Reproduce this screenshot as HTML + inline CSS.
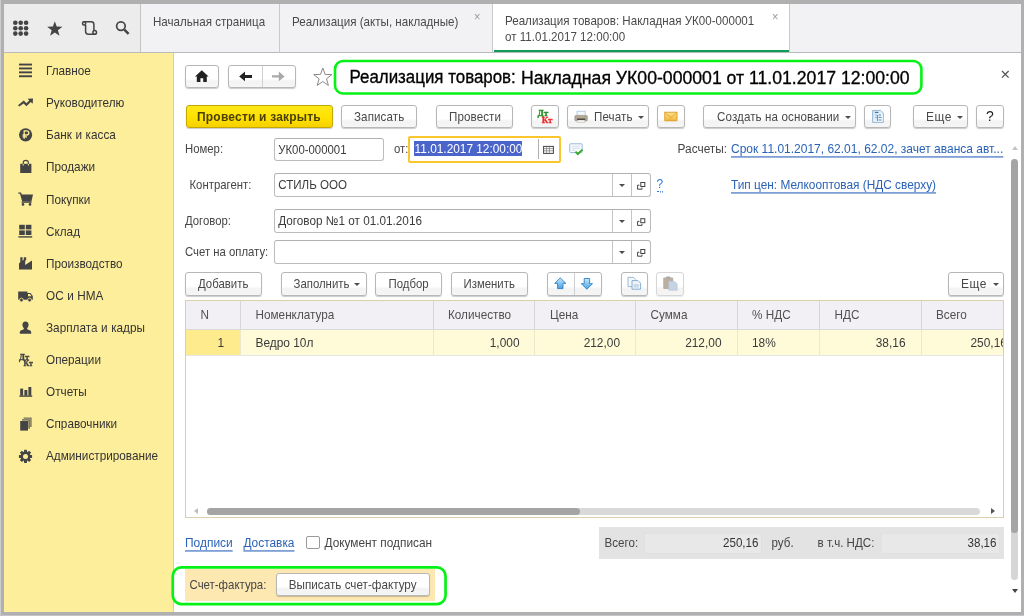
<!DOCTYPE html>
<html><head><meta charset="utf-8">
<style>
*{box-sizing:border-box;margin:0;padding:0}
html,body{width:1024px;height:616px;overflow:hidden;background:#b3b3b3}
body{font-family:"Liberation Sans",sans-serif;font-size:11.6px;color:#3c3c3c;position:relative}
.abs,.abs *{position:absolute}
.t{white-space:nowrap;line-height:14px;transform:scaleY(1.08);transform-origin:0 64%}
#frame{left:0;top:0;width:1024px;height:616px;background:#b0b0b0;will-change:transform}
#topbar{left:4px;top:4px;width:1017px;height:49px;background:#ececec}
#tabs{left:140px;top:4px;width:881px;height:49px;background:#f2f1f4;border-left:1px solid #c4c4c4}
#barline{left:4px;top:52px;width:1017px;height:1px;background:#b9b9b9}
#side{left:4px;top:53px;width:170px;height:559px;background:#fdee9c;border-right:1px solid #e3d274}
#main{left:174px;top:53px;width:847px;height:559px;background:#fff}
.btn{border:1px solid #b7b7b7;border-radius:3px;background:linear-gradient(#ffffff 0%,#ffffff 60%,#f3f3f3 72%,#f6f6f6 100%);box-shadow:0 1px 1px rgba(0,0,0,.2);height:23.5px}
.btn .t{top:4.2px;color:#484848;letter-spacing:.1px}
.inp{border:1px solid #bcbcbc;border-top-color:#b0b0b0;border-radius:3px;background:#fff}
.inp .t{color:#3c3c3c}
a,.lnk{color:#2a62b8;text-decoration:underline;text-underline-offset:2.6px;text-decoration-thickness:1px}
.ybtn{background:linear-gradient(#ffe81a 0%,#ffe200 55%,#f6d000 100%);border-color:#c4a800}
.dd{width:0;height:0;border-left:3px solid transparent;border-right:3px solid transparent;border-top:3.3px solid #4c4c4c}
.vl{top:0;width:1px;height:100%;background:#c4c4c4}
.lab{font-size:11.35px;color:#454545}
.cl{top:301px;width:1px;height:54px;background:linear-gradient(#d6d6d6 0,#d6d6d6 28px,#ece8cc 29px,#ece8cc 54px)}
.th{top:307.5px;color:#505050;font-size:11.75px}
.td{top:336px;color:#3a3a3a;font-size:11.9px}
.ttl{top:67.3px;line-height:22px;color:#000;-webkit-text-stroke:.3px #000;transform:scaleY(1.07);transform-origin:0 80%}
#edgeL{left:0;top:0;width:1px;height:616px;background:#cdcdcd}
#edgeB{left:0;top:615px;width:1024px;height:1px;background:#c4c4ca}
.sb{font-size:11.75px;word-spacing:.3px;transform:scaleY(1.09);transform-origin:0 30%}
</style></head><body>
<div id="frame" class="abs">
<div id="edgeL"></div><div id="edgeB"></div>
<div id="topbar"></div>
<div id="tabs"></div>
<div id="barline"></div>
<div id="side"></div>
<div id="main"></div>
<!--top-->
<svg style="left:0;top:0" width="140" height="54" viewBox="0 0 140 54">
 <g fill="#444">
  <circle cx="15.3" cy="22.8" r="2.3"/><circle cx="20.7" cy="22.8" r="2.3"/><circle cx="26.1" cy="22.8" r="2.3"/>
  <circle cx="15.3" cy="28.2" r="2.3"/><circle cx="20.7" cy="28.2" r="2.3"/><circle cx="26.1" cy="28.2" r="2.3"/>
  <circle cx="15.3" cy="33.6" r="2.3"/><circle cx="20.7" cy="33.6" r="2.3"/><circle cx="26.1" cy="33.6" r="2.3"/>
  <path d="M54.8 21.2 L56.7 26.6 L62.4 26.7 L57.9 30.2 L59.5 35.7 L54.8 32.4 L50.1 35.7 L51.7 30.2 L47.2 26.7 L52.9 26.6 Z"/>
 </g>
 <g fill="none" stroke="#444" stroke-width="1.5">
  <path d="M85.6 25 L85.6 31.5 Q85.6 34.2 88.3 34.2 L94.6 34.2 M83.6 21.8 L91.2 21.8 Q93.9 21.8 93.9 24.5 L93.9 31"/>
  <rect x="82.6" y="21.8" width="3" height="3.2" rx="1.2"/>
  <circle cx="94.7" cy="32.4" r="1.8"/>
  <circle cx="120.9" cy="26.1" r="4.3" stroke-width="1.7"/>
  <path d="M124.3 29.6 L128.6 33.8" stroke-width="2.5" stroke-linecap="butt"/>
 </g>
</svg>
<div class="t" style="left:153px;top:15px;color:#4a4a4a">Начальная страница</div>
<div style="left:279px;top:4px;width:1px;height:49px;background:#c9c9c9"></div>
<div class="t" style="left:292px;top:15px;color:#4a4a4a">Реализация (акты, накладные)</div>
<div class="t" style="left:474px;top:10px;color:#999;font-size:11px">×</div>
<div style="left:492px;top:4px;width:1px;height:49px;background:#c9c9c9"></div>
<div style="left:493px;top:4px;width:296px;height:48px;background:#fff"></div>
<div style="left:494px;top:50px;width:295px;height:2px;background:#0f9d58"></div>
<div style="left:789px;top:4px;width:1px;height:49px;background:#c9c9c9"></div>
<div class="t" style="left:505px;top:14.3px;color:#4a4a4a">Реализация товаров: Накладная УК00-000001</div>
<div class="t" style="left:505px;top:30.3px;color:#4a4a4a">от 11.01.2017 12:00:00</div>
<div class="t" style="left:772px;top:10px;color:#999;font-size:11px">×</div>
<!--side-->
<svg style="left:0;top:54px" width="60" height="440" viewBox="0 54 60 440">
<g fill="#444" stroke="none">
 <!-- hamburger -->
 <rect x="19" y="63.6" width="13" height="1.9"/><rect x="19" y="67.5" width="13" height="1.9"/><rect x="19" y="71.4" width="13" height="1.9"/><rect x="19" y="75.3" width="13" height="1.9"/>
 <!-- trend -->
 <path d="M19.2 106.6 L18 105.2 L23.8 100.6 L26.4 103.2 L29.3 100.4 L27.6 98.7 L33 98.4 L32.7 103.8 L30.8 101.9 L26.4 106.2 L23.6 103.4 Z"/>
 <!-- ruble -->
 <circle cx="25.6" cy="134.8" r="6.6"/>
 <!-- bag -->
 <path d="M20.2 163.8 L31.4 163.8 L31.4 173 L20.2 173 Z"/>
 <!-- cart -->
 <path d="M18.3 192.4 L21 192.4 L21.9 194.6 L33 194.6 L31.4 201.6 L22.2 201.6 L20 193.8 L18.3 193.8 Z"/><rect x="21.6" y="201.4" width="10" height="1.4"/>
 <circle cx="23" cy="204.4" r="1.3"/><circle cx="30" cy="204.4" r="1.3"/>
 <!-- warehouse -->
 <rect x="19.2" y="224.8" width="5.6" height="4.6"/><rect x="25.8" y="224.8" width="5.6" height="4.6"/>
 <rect x="19.2" y="230.4" width="5.6" height="4.6"/><rect x="25.8" y="230.4" width="5.6" height="4.6"/>
 <rect x="18.4" y="236.2" width="13.8" height="1.4"/>
 <!-- factory -->
 <path d="M19 269.6 L19 263.5 L20.3 262 L20.3 257.2 L22.6 257.2 L22.6 261 L23.8 259.6 L23.8 257.2 L26.2 257.2 L26.2 259.8 L25.2 261 L25.2 265 L32 260.5 L32 269.6 Z"/>
 <!-- truck -->
 <path d="M18.2 291.4 L27.4 291.4 L27.4 293 L30.4 293 L32.8 296 L32.8 299.8 L18.2 299.8 Z"/>
 <circle cx="21.4" cy="300" r="1.9" stroke="#fdee9c" stroke-width="0.8"/><circle cx="29.6" cy="300" r="1.9" stroke="#fdee9c" stroke-width="0.8"/>
 <!-- person -->
 <path d="M25.5 321.4 C27.6 321.4 28.6 323 28.6 324.8 C28.6 326.4 27.8 327.6 27.2 328.2 L27.2 329.2 L30.2 330.4 Q31.2 331 31.2 332.2 L31.2 333.8 L19.8 333.8 L19.8 332.2 Q19.8 331 20.8 330.4 L23.8 329.2 L23.8 328.2 C23.2 327.6 22.4 326.4 22.4 324.8 C22.4 323 23.4 321.4 25.5 321.4 Z"/>
 <!-- bars -->
 <rect x="20.2" y="388.6" width="2.9" height="7"/><rect x="24.4" y="390" width="2.9" height="5.6"/><rect x="28.4" y="387" width="2.9" height="8.6"/>
 <rect x="19.4" y="395.4" width="12.8" height="1.4"/>
 <!-- docs -->
 <path d="M23.6 417.4 L31.6 417.4 L31.6 427 L30.2 427 L30.2 418.8 L23.6 418.8 Z" opacity=".75"/>
 <path d="M22 419.2 L29.8 419.2 L29.8 428.8 L28.4 428.8 L28.4 420.6 L22 420.6 Z" opacity=".85"/>
 <rect x="20.2" y="421" width="7.8" height="9.6"/>
 <!-- gear -->
 <g transform="translate(25.5 456.4)">
  <g id="teeth"><rect x="-1.5" y="-6.6" width="3" height="13.2" rx=".4"/><rect x="-1.5" y="-6.6" width="3" height="13.2" rx=".4" transform="rotate(45)"/><rect x="-1.5" y="-6.6" width="3" height="13.2" rx=".4" transform="rotate(90)"/><rect x="-1.5" y="-6.6" width="3" height="13.2" rx=".4" transform="rotate(135)"/></g>
  <circle r="4.9"/><circle r="2.5" fill="#fdee9c"/>
 </g>
</g>
<!-- bag handle -->
<path d="M23.2 165.5 L23.2 162.8 Q23.2 160.4 25.8 160.4 Q28.4 160.4 28.4 162.8 L28.4 165.5" fill="none" stroke="#444" stroke-width="1.1"/>
<path d="M23.2 164 L23.2 165.6 M28.4 164 L28.4 165.6" stroke="#fdee9c" stroke-width="1" fill="none"/>
<!-- ruble glyph -->
<path d="M24.2 138.8 L24.2 130.8 L26.6 130.8 Q28.8 130.8 28.8 132.9 Q28.8 135 26.6 135 L22.6 135 M22.6 136.9 L27 136.9" fill="none" stroke="#fdee9c" stroke-width="1.3"/>
<!-- truck window -->
<path d="M28 294 L29.9 294 L31.6 296.3 L28 296.3 Z" fill="#fdee9c"/>
<!-- dtkt -->
<text x="19" y="360" font-family="Liberation Serif" font-weight="bold" font-size="8.7" fill="#444" stroke="#444" stroke-width=".35">Дт</text>
<text x="23.5" y="366.4" font-family="Liberation Serif" font-weight="bold" font-size="7.8" fill="#444" stroke="#444" stroke-width=".35">Кт</text>
</svg>
<div class="t sb" style="left:46px;top:63.1px;color:#333">Главное</div>
<div class="t sb" style="left:46px;top:95.2px;color:#333">Руководителю</div>
<div class="t sb" style="left:46px;top:127.3px;color:#333">Банк и касса</div>
<div class="t sb" style="left:46px;top:159.4px;color:#333">Продажи</div>
<div class="t sb" style="left:46px;top:191.5px;color:#333">Покупки</div>
<div class="t sb" style="left:46px;top:223.6px;color:#333">Склад</div>
<div class="t sb" style="left:46px;top:255.7px;color:#333">Производство</div>
<div class="t sb" style="left:46px;top:287.8px;color:#333">ОС и НМА</div>
<div class="t sb" style="left:46px;top:319.9px;color:#333">Зарплата и кадры</div>
<div class="t sb" style="left:46px;top:352.0px;color:#333">Операции</div>
<div class="t sb" style="left:46px;top:384.1px;color:#333">Отчеты</div>
<div class="t sb" style="left:46px;top:416.2px;color:#333">Справочники</div>
<div class="t sb" style="left:46px;top:448.3px;color:#333">Администрирование</div>
<!--head-->
<div class="btn" style="left:185px;top:65px;width:34px;height:23px"></div>
<div class="btn" style="left:228px;top:65px;width:68px;height:23px"></div>
<div style="left:262px;top:66px;width:1px;height:21px;background:#d0d0d0"></div>
<svg style="left:180px;top:60px" width="160" height="36" viewBox="180 60 160 36">
 <path d="M201.8 70.2 L208.6 76.6 L206.8 76.6 L206.8 82 L203.2 82 L203.2 78.2 L200.4 78.2 L200.4 82 L196.8 82 L196.8 76.6 L195 76.6 Z" fill="#222"/>
 <path d="M239.2 76.4 L245 71.6 L245 74.9 L252 74.9 L252 77.9 L245 77.9 L245 81.2 Z" fill="#222"/>
 <path d="M284.6 76.4 L278.8 71.6 L278.8 75.2 L272 75.2 L272 77.6 L278.8 77.6 L278.8 81.2 Z" fill="#a9a9a9"/>
 <path d="M322.8 68.0 L325.1 74.4 L331.9 74.6 L326.5 78.8 L328.4 85.4 L322.8 81.5 L317.2 85.4 L319.1 78.8 L313.7 74.6 L320.5 74.4 Z" fill="#fff" stroke="#8a8a8a" stroke-width="1"/>
</svg>
<svg style="left:330px;top:56px" width="600" height="44" viewBox="330 56 600 44"><rect x="335" y="61" width="586.4" height="32.5" rx="8" fill="none" stroke="#06f216" stroke-width="2.6"/></svg>
<div class="t ttl" style="left:349.5px;font-size:16.9px">Реализация товаров:</div>
<div class="t ttl" style="left:521px;font-size:17.65px">Накладная УК00-000001 от 11.01.2017 12:00:00</div>
<svg style="left:1000px;top:69px" width="12" height="12" viewBox="0 0 12 12"><path d="M2 2 L8.6 8.6 M8.6 2 L2 8.6" stroke="#555" stroke-width="1.3" fill="none"/></svg>
<!--form-->
<!-- toolbar -->
<div class="btn ybtn" style="left:186px;top:104.7px;width:146.5px"><div class="t" style="left:10px;font-weight:bold;font-size:12px;color:#4a4000;letter-spacing:.2px">Провести и закрыть</div></div>
<div class="btn" style="left:341px;top:104.7px;width:76px"><div class="t" style="left:12px">Записать</div></div>
<div class="btn" style="left:436px;top:104.7px;width:77px"><div class="t" style="left:12px">Провести</div></div>
<div class="btn" style="left:531px;top:104.7px;width:27.6px"></div>
<div class="btn" style="left:567px;top:104.7px;width:82px"><div class="t" style="left:26px">Печать</div><div class="dd" style="left:70px;top:10px"></div></div>
<div class="btn" style="left:657px;top:104.7px;width:28px"></div>
<div class="btn" style="left:703px;top:104.7px;width:153px"><div class="t" style="left:13px">Создать на основании</div><div class="dd" style="left:141px;top:10px"></div></div>
<div class="btn" style="left:864px;top:104.7px;width:27px"></div>
<div class="btn" style="left:913px;top:104.7px;width:55px"><div class="t" style="left:12px;font-size:12px;letter-spacing:.5px">Еще</div><div class="dd" style="left:43px;top:10px"></div></div>
<div class="btn" style="left:976px;top:104.7px;width:28px"><div class="t" style="left:9px;top:2px;font-size:14px;color:#222;line-height:17px">?</div></div>
<!-- row 1 -->
<div class="t lab" style="left:185px;top:142px">Номер:</div>
<div class="inp" style="left:274px;top:138px;width:110px;height:22.5px"><div class="t" style="left:3.2px;top:3.5px;font-size:11.4px">УК00-000001</div></div>
<div class="t lab" style="left:394px;top:142px">от:</div>
<div style="left:408px;top:135.5px;width:153px;height:27px;border:2px solid #fbc62b;border-radius:2px;background:#fff"></div>
<div style="left:414.4px;top:141.3px;width:108px;height:14.6px;background:#4b64c9"></div>
<div class="t" style="left:414.6px;top:141.6px;font-size:11.85px;color:#fff">11.01.2017 12:00:00</div>
<div style="left:538px;top:139px;width:1px;height:20px;background:#b0b0b0"></div>
<div class="t lab" style="left:677.5px;top:142px;font-size:11.9px">Расчеты:</div>
<div class="t lnk" style="left:731px;top:142px;font-size:12px">Срок 11.01.2017, 62.01, 62.02, зачет аванса авт...</div>
<!-- row 2 -->
<div class="t lab" style="left:189.5px;top:178px">Контрагент:</div>
<div class="inp" style="left:274px;top:173px;width:377px;height:23.5px"><div class="t" style="left:3.2px;top:3.5px">СТИЛЬ ООО</div><div class="vl" style="left:337px"></div><div class="vl" style="left:356px"></div><div class="dd" style="left:344px;top:10px"></div></div>
<div class="t" style="left:656.5px;top:178px;color:#2a7ad0;border-bottom:1px dotted #2a7ad0;line-height:13px;font-size:12px">?</div>
<div class="t lnk" style="left:731px;top:178px;font-size:11.85px">Тип цен: Мелкооптовая (НДС сверху)</div>
<!-- row 3 -->
<div class="t lab" style="left:185px;top:213.9px">Договор:</div>
<div class="inp" style="left:274px;top:209.1px;width:377px;height:23.5px"><div class="t" style="left:3.2px;top:3.5px;font-size:11.75px">Договор №1 от 01.01.2016</div><div class="vl" style="left:337px"></div><div class="vl" style="left:356px"></div><div class="dd" style="left:344px;top:10px"></div></div>
<!-- row 4 -->
<div class="t lab" style="left:185px;top:244.9px">Счет на оплату:</div>
<div class="inp" style="left:274px;top:240.2px;width:377px;height:23.5px"><div class="vl" style="left:337px"></div><div class="vl" style="left:356px"></div><div class="dd" style="left:344px;top:10px"></div></div>
<!--table-->
<!-- table toolbar -->
<div class="btn" style="left:185px;top:272.2px;width:77px"><div class="t" style="left:12px;font-size:11.4px;letter-spacing:0">Добавить</div></div>
<div class="btn" style="left:280.5px;top:272.2px;width:86px"><div class="t" style="left:12px;font-size:11.4px;letter-spacing:0">Заполнить</div><div class="dd" style="left:72.5px;top:10px"></div></div>
<div class="btn" style="left:375px;top:272.2px;width:67px"><div class="t" style="left:12.5px;font-size:11.4px;letter-spacing:0">Подбор</div></div>
<div class="btn" style="left:450.5px;top:272.2px;width:77px"><div class="t" style="left:12px;font-size:11.4px;letter-spacing:0">Изменить</div></div>
<div class="btn" style="left:547px;top:272.2px;width:55px"></div>
<div style="left:574px;top:273.2px;width:1px;height:21.5px;background:#cfcfcf"></div>
<div class="btn" style="left:621px;top:272.2px;width:27px"></div>
<div class="btn" style="left:656px;top:272.2px;width:28px;border-color:#d6d6d6;box-shadow:0 1px 1px rgba(0,0,0,.08)"></div>
<div class="btn" style="left:948px;top:272.2px;width:56px"><div class="t" style="left:12px;font-size:12px;letter-spacing:.5px">Еще</div><div class="dd" style="left:44px;top:10px"></div></div>
<!-- table -->
<div style="left:185px;top:300px;width:819px;height:218px;border:1px solid #d9d0b0;background:#fff"></div>
<div style="left:186px;top:301px;width:817px;height:28px;background:#f2f0f4"></div>
<div style="left:186px;top:329px;width:817px;height:1px;background:#d9d9d9"></div>
<div style="left:186px;top:330px;width:817px;height:25px;background:#fffbd9"></div>
<div style="left:186px;top:330px;width:54px;height:25px;background:#fdeb8e"></div>
<div style="left:186px;top:355px;width:817px;height:1px;background:#e6e6e6"></div>
<div class="cl" style="left:240px"></div><div class="cl" style="left:433px"></div><div class="cl" style="left:534px"></div><div class="cl" style="left:635px"></div><div class="cl" style="left:736.5px"></div><div class="cl" style="left:819px"></div><div class="cl" style="left:920.5px"></div>
<div class="t th" style="left:200.5px">N</div>
<div class="t th" style="left:255.5px">Номенклатура</div>
<div class="t th" style="left:448px">Количество</div>
<div class="t th" style="left:550px">Цена</div>
<div class="t th" style="left:650.5px">Сумма</div>
<div class="t th" style="left:752px">% НДС</div>
<div class="t th" style="left:834.5px">НДС</div>
<div class="t th" style="left:936px">Всего</div>
<div class="t td" style="right:800px">1</div>
<div class="t td" style="left:255.5px">Ведро 10л</div>
<div class="t td" style="right:504.5px">1,000</div>
<div class="t td" style="right:404px">212,00</div>
<div class="t td" style="right:302.5px">212,00</div>
<div class="t td" style="left:752px">18%</div>
<div class="t td" style="right:118.5px">38,16</div>
<div style="left:960px;top:330px;width:43px;height:25px;overflow:hidden"><div class="t td" style="left:10.5px;top:6px">250,16</div></div>
<!-- h scroll -->
<div style="left:207px;top:508px;width:773px;height:7px;border-radius:4px;background:#d9d9d9"></div>
<div style="left:207px;top:508px;width:373px;height:7px;border-radius:4px;background:#a4a4a4"></div>
<div style="left:194px;top:508px;width:0;height:0;border-top:3.5px solid transparent;border-bottom:3.5px solid transparent;border-right:4px solid #bdbdbd"></div>
<div style="left:991px;top:508px;width:0;height:0;border-top:3.5px solid transparent;border-bottom:3.5px solid transparent;border-left:4px solid #555"></div>
<!-- v scroll -->
<div style="left:1011.2px;top:159px;width:7px;height:421px;border-radius:4px;background:#d6d6d6"></div>
<div style="left:1011.2px;top:159px;width:7px;height:374px;border-radius:4px;background:#a4a4a4"></div>
<div style="left:1011.5px;top:145.5px;width:0;height:0;border-left:3.5px solid transparent;border-right:3.5px solid transparent;border-bottom:4px solid #c4c4c4"></div>
<div style="left:1011.5px;top:589px;width:0;height:0;border-left:3.5px solid transparent;border-right:3.5px solid transparent;border-top:4px solid #444"></div>
<!--icons-->
<svg style="left:174px;top:100px" width="850" height="200" viewBox="174 100 850 200">
<defs>
 <linearGradient id="gEnv" x1="0" y1="0" x2="0" y2="1"><stop offset="0" stop-color="#fde596"/><stop offset="1" stop-color="#f0b234"/></linearGradient>
 <linearGradient id="gArr" x1="0" y1="0" x2="0" y2="1"><stop offset="0" stop-color="#c8e8fc"/><stop offset="1" stop-color="#4aa2e4"/></linearGradient>
 <linearGradient id="gDoc" x1="0" y1="0" x2="1" y2="1"><stop offset="0" stop-color="#cfe2f1"/><stop offset="1" stop-color="#ffffff"/></linearGradient>
</defs>
<!-- DtKt -->
<text x="537.4" y="116.2" font-family="Liberation Serif" font-weight="bold" font-size="9.2" fill="#1e8a1e" stroke="#1e8a1e" stroke-width=".3">Дт</text>
<text x="541.8" y="123" font-family="Liberation Serif" font-weight="bold" font-size="9" fill="#ee2a2a" stroke="#ee2a2a" stroke-width=".3">Кт</text>
<!-- printer -->
<rect x="577" y="111.2" width="8.2" height="5" fill="#f4f8fc" stroke="#a9c3dc" stroke-width=".8"/>
<rect x="574.8" y="115.4" width="12.6" height="5.6" rx="1.2" fill="#b9a898" stroke="#9c8b7c" stroke-width=".6"/>
<rect x="577" y="118.6" width="8.2" height="1.6" fill="#2e2a28"/>
<rect x="577.4" y="120" width="7.4" height="2.6" fill="#f2f2f2" stroke="#b5b5b5" stroke-width=".5"/>
<rect x="584.2" y="116.6" width="1.4" height="1" fill="#5ad05a"/>
<!-- envelope -->
<rect x="664.8" y="112.2" width="12.2" height="8.6" fill="url(#gEnv)" stroke="#d9991c" stroke-width=".9"/>
<path d="M665 112.6 L670.9 117.6 L676.8 112.6" fill="none" stroke="#e0a52c" stroke-width=".9"/>
<path d="M665 120.6 L669 116.4 M676.8 120.6 L672.8 116.4" fill="none" stroke="#f6d070" stroke-width=".7"/>
<!-- doc structure -->
<path d="M872.6 110.4 L880.6 110.4 L883.4 113.2 L883.4 122.4 L872.6 122.4 Z" fill="url(#gDoc)" stroke="#8bb0d2" stroke-width=".9"/>
<path d="M875 112.4 L878.4 112.4" stroke="#2f6fb0" stroke-width="1.1"/>
<path d="M876 114.6 L876 115.6 M876 117 L876 118 M877.4 115 L877.4 121 M878.6 115 L881 115 M878.6 117.4 L881.6 117.4 M878.6 120 L881.6 120" stroke="#4a80b8" stroke-width=".9"/>
<!-- calendar -->
<rect x="543.6" y="146.4" width="9.8" height="7" fill="#fff" stroke="#444" stroke-width="1"/>
<path d="M544 148.6 L553 148.6 M544 150.8 L553 150.8 M546.6 147 L546.6 153 M549.4 147 L549.4 153" stroke="#777" stroke-width=".7"/>
<!-- status -->
<rect x="569.8" y="143.8" width="12.4" height="8.8" rx=".8" fill="#fff" stroke="#85b2d8" stroke-width=".9"/>
<path d="M571.6 146.2 L580.4 146.2 M571.6 148.2 L580.4 148.2 M571.6 150.2 L575 150.2" stroke="#bcd3e6" stroke-width=".8"/>
<path d="M575.4 151.6 L577.8 154 L582.4 149.6" fill="none" stroke="#3daa2c" stroke-width="2"/>
<!-- open icons -->
<g fill="none" stroke="#444" stroke-width="1">
 <g id="op"><rect x="640.8" y="182.5" width="4" height="4"/><path d="M639.4 185.2 L637.6 185.2 L637.6 189.2 L642 189.2 L642 187.6"/></g>
 <use href="#op" y="36.2"/><use href="#op" y="67"/>
</g>
<!-- up/down arrows -->
<path d="M560.3 277.9 L565.9 283.4 L563 283.4 L563 288.6 L557.6 288.6 L557.6 283.4 L554.7 283.4 Z" fill="url(#gArr)" stroke="#2f7fc4" stroke-width=".9"/>
<path d="M586.9 289.2 L592.5 283.7 L589.6 283.7 L589.6 278.5 L584.2 278.5 L584.2 283.7 L581.3 283.7 Z" fill="url(#gArr)" stroke="#2f7fc4" stroke-width=".9"/>
<!-- copy -->
<path d="M628 277.4 L633.6 277.4 L635.6 279.4 L635.6 286.6 L628 286.6 Z" fill="#f3f8fc" stroke="#8fb3d4" stroke-width=".9"/>
<path d="M632 280.6 L638 280.6 L640.6 283.2 L640.6 289.2 L632 289.2 Z" fill="#eef4fa" stroke="#7fa6cc" stroke-width=".9"/>
<rect x="633.6" y="284" width="5.2" height="3.6" fill="#c9d9e8"/>
<!-- paste -->
<rect x="663.2" y="277.6" width="10" height="11.4" rx="1" fill="#bdaea2"/>
<rect x="666" y="276.4" width="4.4" height="2.2" rx=".8" fill="#a8a8a8"/>
<path d="M668.8 281.2 L674.4 281.2 L677.2 284 L677.2 290.2 L668.8 290.2 Z" fill="#c4d4e2" stroke="#b4c6d8" stroke-width=".6"/>
</svg>
<!--foot-->
<div class="t lnk" style="left:185px;top:535.5px;font-size:11.95px">Подписи</div>
<div class="t lnk" style="left:243.4px;top:535.5px;font-size:11.9px">Доставка</div>
<div style="left:306px;top:535.5px;width:13.5px;height:13.5px;border:1px solid #9a9a9a;border-radius:2px;background:#fff"></div>
<div class="t" style="left:324.5px;top:535.5px;color:#454545;font-size:11.85px">Документ подписан</div>
<div style="left:599px;top:527px;width:404.5px;height:31.5px;background:#e3e3e3"></div>
<div style="left:643.5px;top:532.5px;width:118.5px;height:21px;background:#e8e8e8;border:1px solid #e0e0e0"></div>
<div style="left:881px;top:532.5px;width:118.5px;height:21px;background:#e8e8e8;border:1px solid #e0e0e0"></div>
<div class="t" style="left:604.5px;top:536px;color:#454545">Всего:</div>
<div class="t" style="right:265.5px;top:536px;color:#333">250,16</div>
<div class="t" style="left:771.5px;top:536px;color:#454545">руб.</div>
<div class="t" style="left:817.5px;top:536px;color:#454545">в т.ч. НДС:</div>
<div class="t" style="right:27.5px;top:536px;color:#333">38,16</div>
<div style="left:185px;top:569px;width:249.5px;height:31.5px;background:#fde8b2"></div>
<div class="t" style="left:189.5px;top:577.5px;color:#454545;font-size:11.45px">Счет-фактура:</div>
<div class="btn" style="left:276px;top:572.5px;width:154px"><div class="t" style="left:11.8px;font-size:11.7px;letter-spacing:0">Выписать счет-фактуру</div></div>
<svg style="left:168px;top:562px" width="284" height="48" viewBox="168 562 284 48"><rect x="172.75" y="567.45" width="272.8" height="36.6" rx="8.5" fill="none" stroke="#06f216" stroke-width="2.7"/></svg>
</div>
</body></html>
